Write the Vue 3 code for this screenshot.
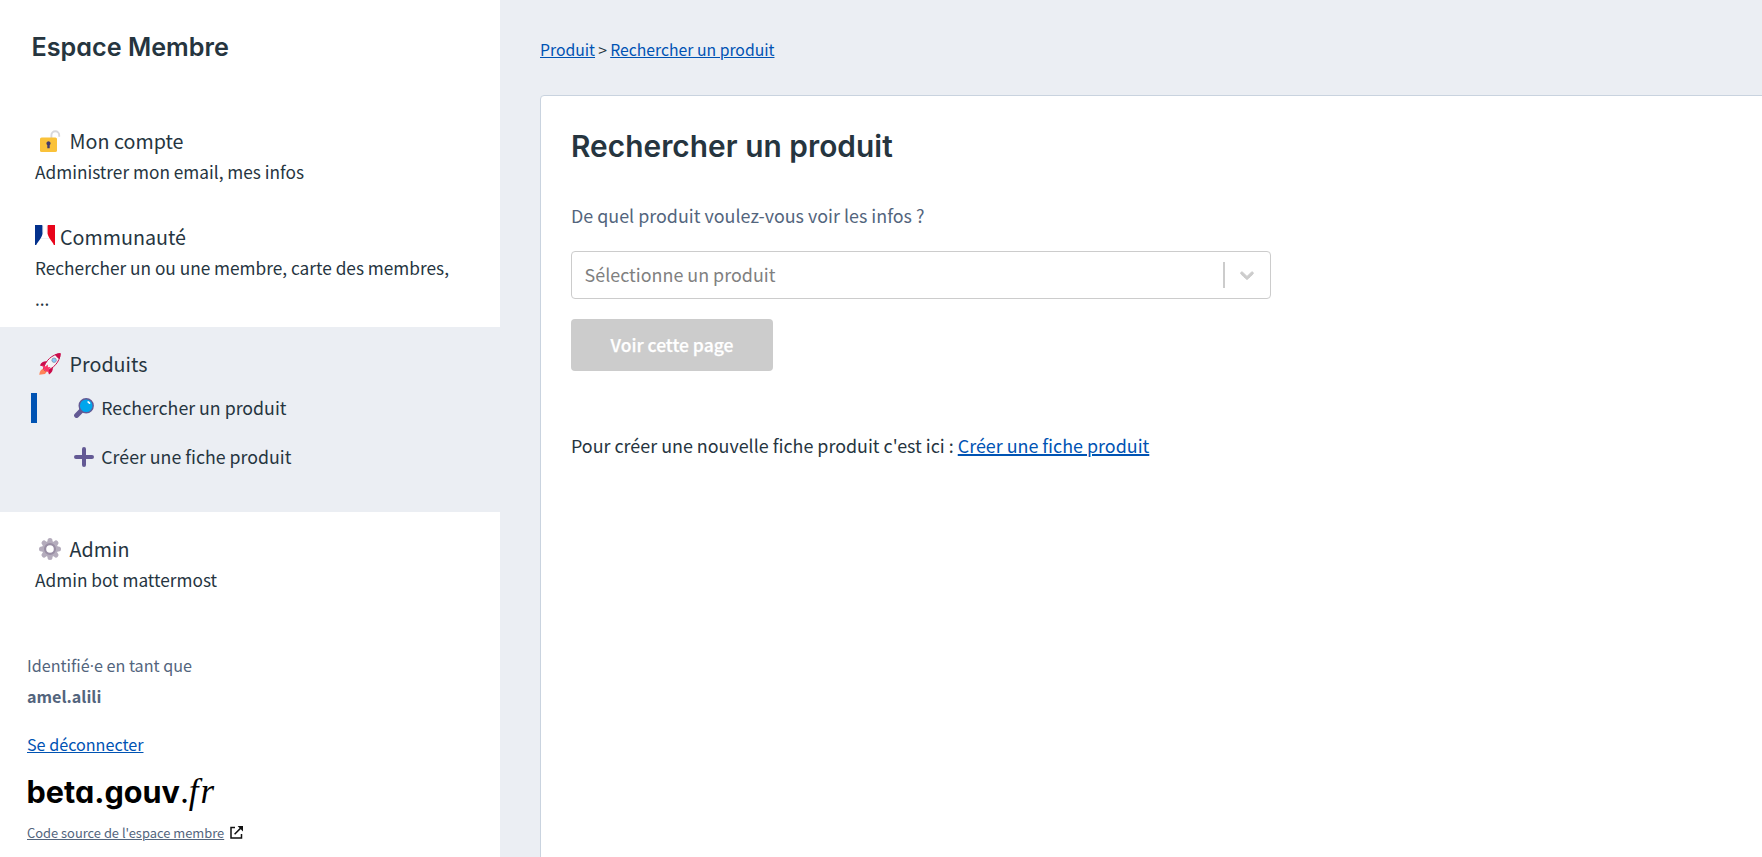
<script setup>
const produits = [
  { label: 'Rechercher un produit', icon: 'search', active: true },
  { label: 'Créer une fiche produit', icon: 'plus', active: false },
]
</script>

<template>
  <div class="page">
    <aside class="sidebar">
      <h2 class="brand">Espace Membre</h2>
      <nav>
        <section class="item">
          <div class="title">
            <svg class="icon" viewBox="0 0 22 22">
              <path d="M12.4 8V5.2a3.9 3.9 0 0 1 7.8 0v1.6" fill="none" stroke="#d8d8dc" stroke-width="1.9" />
              <rect x="1" y="7.4" width="17" height="14.6" rx="1.6" fill="#fac23a" />
              <path d="M9.5 11.2a2.2 2.2 0 0 1 1.2 4v3h-2.4v-3a2.2 2.2 0 0 1 1.2-4z" fill="#433b6b" />
            </svg>
            <span>Mon compte</span>
          </div>
          <p class="desc">Administrer mon email, mes infos</p>
        </section>

        <section class="item">
          <div class="title">
            <svg class="flag" viewBox="0 0 20 20">
              <rect width="20" height="20" fill="#fff" />
              <path d="M0 0h7.6v7.6c0 2.3-1 4-2.2 6.2L2 18.4 1.2 20H0z" fill="#03318c" />
              <path d="M20 0h-7.6v7c0 2.3 1 4.3 2.4 6.8l3.4 4.6.6 1.6H20z" fill="#e8041b" />
              <path d="M6 13.5h8M7.6 0l.5 1.3v6.4M12.4 0l-.5 1.3v6.4" stroke="#e9edf2" stroke-width=".8" fill="none" />
            </svg>
            <span>Communauté</span>
          </div>
          <p class="desc">Rechercher un ou une membre, carte des membres, ...</p>
        </section>

        <section class="item current">
          <div class="title">
            <svg class="icon" viewBox="0 0 22 22">
              <path d="M5 15.6c-2.4.1-4.3 2.2-4.8 6.1l5.8-.6 2.3-3z" fill="#ff8257" />
              <path d="M8.2 8.4C4.8 8 2.4 9.3.9 12.4l3.7 1zM13.8 14c.4 3-.7 5.7-3.8 7.6l-1.1-3.9z" fill="#ca0b4a" />
              <path d="M4.5 15.8C6 8 13.2 1.2 21.1.7 21 8.8 14.4 15.8 6.4 18z" fill="#f4f4f6" stroke="#ca0b4a" stroke-width="1" />
              <path d="M15.8 1.4C17.6.7 19.4.4 21.7.3c-.1 2.2-.5 4-1.1 5.8-1.4-.6-4-3.1-4.8-4.7z" fill="#ca0b4a" />
              <path d="M3.2 11.9l3.2 1.6 2.4-2.1.1 2.9 2.7-.4-2.1 3.3 1.1 2.1c-2.6-.2-6.2-3.1-7.4-7.4z" fill="#fc3465" />
              <circle cx="15.1" cy="7.2" r="2.2" fill="#83cbff" stroke="#8d94ae" stroke-width=".9" />
            </svg>
            <span>Produits</span>
          </div>
          <ul class="sub">
            <li v-for="p in produits" :key="p.label" :class="{ active: p.active }">
              <svg v-if="p.icon === 'search'" class="sub-icon" viewBox="0 0 20 20">
                <path d="M7.2 12.8l-4.6 4.6" stroke="#635994" stroke-width="5" stroke-linecap="round" />
                <circle cx="12.2" cy="7.8" r="7" fill="#00a6ed" stroke="#635994" stroke-width="1.4" />
                <path d="M14.2 3.9a3 3 0 0 1 1.3 1.3" fill="none" stroke="#fff" stroke-width="1.7" stroke-linecap="round" />
              </svg>
              <svg v-else class="sub-icon" viewBox="0 0 20 20">
                <path d="M10 2v16M2 10h16" stroke="#635994" stroke-width="4" stroke-linecap="round" />
              </svg>
              <span>{{ p.label }}</span>
            </li>
          </ul>
        </section>

        <section class="item">
          <div class="title">
            <svg class="icon" viewBox="0 0 22 22">
              <g stroke="#b4acbc" stroke-width="5" stroke-linecap="round">
                <path d="M11 2.5v17M2.5 11h17M5 5l12 12M17 5L5 17" />
              </g>
              <circle cx="11" cy="11" r="8" fill="#b4acbc" />
              <circle cx="11" cy="11" r="4.9" fill="#fff" stroke="#998ea4" stroke-width="2.2" />
            </svg>
            <span>Admin</span>
          </div>
          <p class="desc">Admin bot mattermost</p>
        </section>
      </nav>

      <footer class="foot">
        <div>Identifié<span class="dot">·</span>e en tant que</div>
        <div class="user">amel.alili</div>
        <a class="logout">Se déconnecter</a>
        <div class="logo"><b>beta.gouv</b><i><span>.</span>fr</i></div>
        <div class="source">
          <a>Code source de l'espace membre</a>
          <svg class="ext" viewBox="0 0 13 13">
            <path d="M5 1.5H1v10.5h10.5V8M4.6 8.2l6.6-6.6" fill="none" stroke="#111" stroke-width="1.5" />
            <path d="M7.6 0H13v5.4z" fill="#111" />
          </svg>
        </div>
      </footer>
    </aside>

    <main class="main">
      <div class="crumbs"><a>Produit</a><span class="gt">&gt;</span><a>Rechercher un produit</a></div>
      <div class="card">
        <h1>Rechercher un produit</h1>
        <p class="question">De quel produit voulez-vous voir les infos ?</p>
        <div class="select">
          <span class="placeholder">Sélectionne un produit</span>
          <span class="sep"></span>
          <svg class="chev" viewBox="0 0 20 20">
            <path d="M4.516 7.548c0.436-0.446 1.043-0.481 1.576 0l3.908 3.747 3.908-3.747c0.533-0.481 1.141-0.446 1.574 0 0.436 0.445 0.408 1.197 0 1.615-0.406 0.418-4.695 4.502-4.695 4.502-0.217 0.223-0.502 0.335-0.787 0.335s-0.57-0.112-0.789-0.335c0 0-4.287-4.084-4.695-4.502s-0.436-1.17 0-1.615z" fill="#ccc" stroke="#ccc" stroke-width=".9" />
          </svg>
        </div>
        <button class="btn" disabled>Voir cette page</button>
        <p class="create">Pour créer une nouvelle fiche produit c'est ici : <a>Créer une fiche produit</a></p>
      </div>
    </main>
  </div>
</template>

<style>
body {
  background: #ebeef3;
  overflow: hidden;
}
</style>

<style scoped>
.page {
  display: flex;
  height: 857px;
  overflow: hidden;
  background: #ebeef3;
  color: #26353f;
  font-family: "Noto Sans CJK SC", "Noto Sans", sans-serif;
}
h1, h2, p, ul {
  margin: 0;
  padding: 0;
}
a {
  color: #0053b3;
  text-decoration: underline;
  text-decoration-thickness: 1px;
  text-underline-offset: 1px;
}
.sidebar {
  flex: none;
  box-sizing: border-box;
  width: 500px;
  padding-top: 29px;
  background: #fff;
}
.brand,
h1 {
  font-family: Inter, sans-serif;
  font-weight: 600;
  font-feature-settings: "cv11";
}
.brand {
  height: 36px;
  margin: 0 0 39px 31.5px;
  font-size: 25.2px;
  line-height: 36px;
}
.item {
  padding: 21px 35px 13px;
}
.title {
  display: flex;
  height: 31px;
  font-size: 19.7px;
  line-height: 31px;
}
.icon {
  width: 22px;
  height: 22px;
  margin: 5px 8.6px 0 4px;
}
.flag {
  width: 20px;
  height: 20px;
  margin: 4px 5px 0 0;
}
.desc {
  font-size: 17.25px;
  line-height: 31px;
}
.current {
  padding-bottom: 40px;
  background: #ebeef3;
}
.sub {
  display: flex;
  flex-direction: column;
  gap: 19px;
  margin: 14px 0 0 -4px;
  list-style: none;
}
.sub li {
  display: flex;
  height: 30px;
  padding-left: 37px;
  border-left: 6px solid transparent;
  font-size: 17.75px;
  line-height: 29px;
}
.sub li.active {
  border-left-color: #0053b3;
}
.sub-icon {
  width: 20px;
  height: 20px;
  margin: 5px 7.3px 0 0;
}
.foot {
  padding: 42px 27px 0;
  color: #53657d;
  font-size: 16.15px;
  line-height: 30px;
}
.dot {
  font-family: "Open Sans", sans-serif;
}
.user {
  font-weight: 700;
}
.logout {
  display: block;
  width: max-content;
  margin-top: 18px;
}
.logo {
  display: flex;
  align-items: baseline;
  height: 40px;
  margin: 13px 0 9px -0.5px;
  color: #000;
  line-height: 40px;
}
.logo b {
  font-family: Inter, sans-serif;
  font-size: 30.6px;
  font-feature-settings: "cv11";
}
.logo i {
  margin-left: 1px;
  font-family: "Liberation Serif", serif;
  font-size: 35px;
  letter-spacing: 2px;
}
.logo i span {
  letter-spacing: -1px;
}
.source {
  display: flex;
  font-size: 12.9px;
  line-height: 24px;
}
.source a {
  color: #53657d;
}
.ext {
  width: 13px;
  height: 13px;
  margin: 5px 0 0 5.5px;
}
.main {
  flex: 1;
  padding: 36px 0 0 40px;
}
.crumbs {
  height: 28px;
  margin-bottom: 31px;
  font-size: 15.75px;
  line-height: 28px;
}
.gt {
  padding: 0 3.2px;
}
.card {
  box-sizing: border-box;
  width: 1300px;
  height: 900px;
  padding: 30px;
  border: 1px solid #c9d3df;
  border-radius: 4px;
  background: #fff;
}
h1 {
  height: 40px;
  font-size: 29.8px;
  line-height: 40px;
  letter-spacing: 0.05px;
}
.question {
  margin: 34px 0 21px;
  color: #53657d;
  font-size: 17.9px;
  line-height: 30px;
}
.select {
  display: flex;
  align-items: center;
  box-sizing: border-box;
  width: 700px;
  height: 48px;
  padding: 0 12px;
  border: 1px solid #ccc;
  border-radius: 4px;
}
.placeholder {
  flex: 1;
  padding: 0 0 2px 0.6px;
  color: #808080;
  font-size: 17.9px;
  line-height: 28px;
}
.sep {
  width: 2px;
  height: 26px;
  margin-right: 11px;
  background: #ccc;
}
.chev {
  width: 22px;
  height: 22px;
}
.btn {
  display: block;
  width: 202px;
  height: 52px;
  margin: 20px 0 59px;
  padding: 0;
  border: 0;
  border-radius: 4px;
  background: #ccc;
  color: #fff;
  font: 500 17.5px/28px "Noto Sans CJK SC", "Noto Sans", sans-serif;
  -webkit-text-stroke: 0.25px #fff;
}
.create {
  font-size: 17.9px;
  line-height: 30px;
}
.create a {
  text-decoration-thickness: 2px;
}
</style>
